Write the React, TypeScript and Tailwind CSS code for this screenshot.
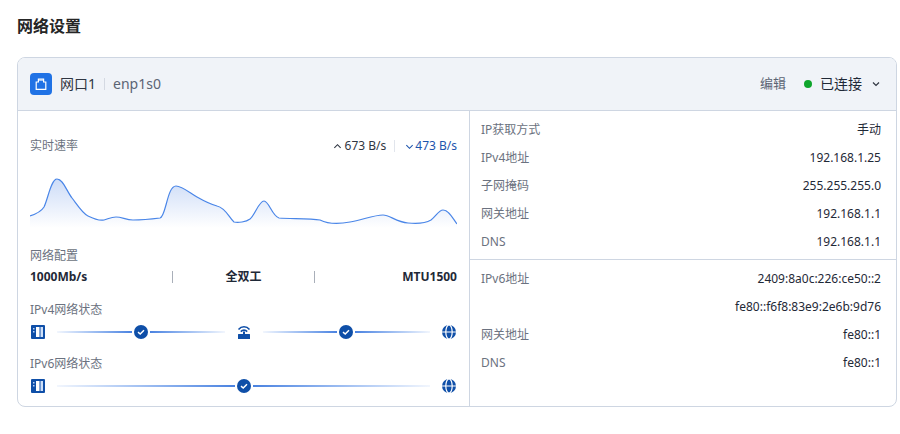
const linePath =
  "M30 216 C36 214 41 212 44 207 C48 199 51 179 57 179 C63 179 66 190 72 198 C78 206 83 214 88 216 C94 219 99 221 104 220 C108 219 111 217 116 217 C122 217 126 220 133 220 C142 220 152 219 160 218 C166 217 167 186 176 186 C182 186 190 193 197 197 C204 201 210 204 217 206 C226 208 229 218 234 222 C238 223 246 222 250 219 C255 215 259 201 264 201 C269 201 272 216 279 218 C290 219 310 218 320 220 C328 224 340 224 350 222 C362 220 374 215 383 215 C390 215 396 222 408 223 C418 224 426 223 431 220 C436 216 439 210 443 210 C449 210 453 219 457 224";

const leftRows = [
  { label: "IP获取方式", value: "手动" },
  { label: "IPv4地址", value: "192.168.1.25" },
  { label: "子网掩码", value: "255.255.255.0" },
  { label: "网关地址", value: "192.168.1.1" },
  { label: "DNS", value: "192.168.1.1" },
];

const ipv6Rows = [
  { label: "IPv6地址", value: "2409:8a0c:226:ce50::2" },
  { label: "", value: "fe80::f6f8:83e9:2e6b:9d76" },
  { label: "网关地址", value: "fe80::1" },
  { label: "DNS", value: "fe80::1" },
];

function InfoRow({ label, value }: { label: string; value: string }) {
  return (
    <div className="flex h-7 items-center justify-between">
      <span className="text-[#6b7280]">{label}</span>
      <span className="text-[#1f2937]">{value}</span>
    </div>
  );
}

function HostIcon() {
  return (
    <svg width="14" height="14" viewBox="0 0 14 14" className="shrink-0">
      <rect x="0" y="0" width="14" height="14" rx="1" fill="#0f4fa8" />
      <rect x="2" y="3" width="1.5" height="1.5" fill="#b9d2f5" />
      <rect x="2" y="6" width="1.5" height="1.5" fill="#b9d2f5" />
      <rect x="5" y="2" width="3.5" height="10" fill="#ffffff" />
      <rect x="9.5" y="2" width="2.5" height="10" fill="#cfe0f8" />
    </svg>
  );
}

function RouterIcon() {
  return (
    <svg width="14" height="14" viewBox="0 0 14 14" className="shrink-0">
      <path d="M1.5 4.5 C4.5 0.8 9.5 0.8 12.5 4.5" fill="none" stroke="#0f4fa8" strokeWidth="1.6" />
      <path d="M3.8 6.6 C5.6 4.6 8.4 4.6 10.2 6.6" fill="none" stroke="#0f4fa8" strokeWidth="1.6" />
      <rect x="6" y="6.5" width="2" height="3" fill="#0f4fa8" />
      <rect x="1" y="9" width="12" height="5" rx="0.5" fill="#0f4fa8" />
    </svg>
  );
}

function GlobeIcon() {
  return (
    <svg width="14" height="14" viewBox="0 0 14 14" className="shrink-0">
      <circle cx="7" cy="7" r="7" fill="#0f4fa8" />
      <ellipse cx="7" cy="7" rx="3.2" ry="7" fill="none" stroke="#ffffff" strokeWidth="1.2" />
      <path d="M0 7 H14" stroke="#ffffff" strokeWidth="1" />
    </svg>
  );
}

function CheckDot() {
  return (
    <span className="flex h-[14px] w-[14px] shrink-0 items-center justify-center rounded-full bg-[#0f4fa8]">
      <svg width="10" height="10" viewBox="0 0 10 10">
        <path d="M2 5.2 L4.2 7 L8 3.2" fill="none" stroke="#ffffff" strokeWidth="1.5" />
      </svg>
    </span>
  );
}

function FadeLink() {
  return (
    <div className="flex flex-1 items-center gap-[2px]">
      <div className="h-[2px] flex-1 bg-gradient-to-r from-[#f2f6fd] to-[#4a82e0]" />
      <CheckDot />
      <div className="h-[2px] flex-1 bg-gradient-to-r from-[#4a82e0] to-[#f2f6fd]" />
    </div>
  );
}

export default function App() {
  return (
    <div
      className="h-[434px] w-[900px] overflow-hidden bg-white pl-[17px] pr-[3px] text-xs text-[#1f2937]"
      style={{ fontFamily: '"Noto Sans", "Noto Sans CJK SC", sans-serif' }}
    >
      <h1 className="flex h-[57px] items-center pb-[5px] text-base font-bold text-[#262626]">网络设置</h1>

      <div className="h-[350px] overflow-hidden rounded-lg border border-[#ced6e2]">
        <header className="flex h-[53px] items-center justify-between border-b border-[#ced6e2] bg-[#f0f3f8] pl-3 pr-[15px]">
          <div className="flex items-center">
            <span className="flex h-[22px] w-[22px] items-center justify-center rounded bg-[#2072e5]">
              <svg width="14" height="14" viewBox="0 0 14 14">
                <path
                  d="M2.2 5 H4.4 V2 H9.6 V5 H11.8 V12.4 H2.2 Z M6 2 V4 M8 2 V4"
                  fill="none"
                  stroke="#ffffff"
                  strokeWidth="1.2"
                />
              </svg>
            </span>
            <span className="ml-2 text-sm text-[#303642]">网口1</span>
            <span className="mx-2 h-3 w-px bg-[#d4d9e2]" />
            <span className="text-sm text-[#5b6474]">enp1s0</span>
          </div>
          <div className="flex items-center">
            <span className="text-[13px] text-[#5b6474]">编辑</span>
            <span className="ml-[18px] h-2 w-2 rounded-full bg-[#0ea52c]" />
            <span className="ml-2 text-sm text-[#1f2937]">已连接</span>
            <svg width="10" height="10" viewBox="0 0 10 10" className="ml-[9px]">
              <path d="M2 3.5 L5 6.5 L8 3.5" fill="none" stroke="#303642" strokeWidth="1.2" />
            </svg>
          </div>
        </header>

        <div className="flex h-[295px]">
          <section className="w-[452px] border-r border-[#ced6e2] px-3">
            <div className="mt-6 flex h-[22px] items-center justify-between">
              <span className="text-[#6b7280]">实时速率</span>
              <div className="flex items-center">
                <svg width="9" height="9" viewBox="0 0 10 10">
                  <path d="M1.5 6.5 L5 3 L8.5 6.5" fill="none" stroke="#303642" strokeWidth="1.2" />
                </svg>
                <span className="ml-[3px] text-[#303642]">673 B/s</span>
                <span className="ml-2 mr-[10px] h-3 w-px bg-[#e1e5ec]" />
                <svg width="9" height="9" viewBox="0 0 10 10">
                  <path d="M1.5 3.5 L5 7 L8.5 3.5" fill="none" stroke="#1c54ad" strokeWidth="1.2" />
                </svg>
                <span className="ml-px text-[#1c54ad]">473 B/s</span>
              </div>
            </div>

            <svg width="427" height="60" viewBox="30 170 427 60" className="mt-[13px] block">
              <defs>
                <linearGradient id="area" x1="0" y1="0" x2="0" y2="1">
                  <stop offset="0" stopColor="#cddcf7" />
                  <stop offset="1" stopColor="#ffffff" />
                </linearGradient>
              </defs>
              <path d={`${linePath} L457 228 L30 228 Z`} fill="url(#area)" />
              <path d={linePath} fill="none" stroke="#4a86e8" strokeWidth="1.2" />
            </svg>

            <div className="mt-4 flex h-5 items-center text-[#6b7280]">网络配置</div>
            <div className="grid h-[22px] grid-cols-3 items-center font-bold text-[#1f2937]">
              <span>1000Mb/s</span>
              <span className="flex h-3 items-center justify-center border-x border-[#a9afb9]">全双工</span>
              <span className="text-right">MTU1500</span>
            </div>

            <div className="mt-3 flex h-5 items-center text-[#6b7280]">IPv4网络状态</div>
            <div className="mt-[5px] flex h-[14px] items-center gap-3 px-px">
              <HostIcon />
              <FadeLink />
              <RouterIcon />
              <FadeLink />
              <GlobeIcon />
            </div>

            <div className="mt-[15px] flex h-5 items-center text-[#6b7280]">IPv6网络状态</div>
            <div className="mt-[5px] flex h-[14px] items-center gap-3 px-px">
              <HostIcon />
              <FadeLink />
              <GlobeIcon />
            </div>
          </section>

          <section className="flex-1">
            <div className="h-[149px] border-b border-[#ced6e2] pl-[11px] pr-[15px] pt-[5px]">
              {leftRows.map((row) => (
                <InfoRow key={row.label} label={row.label} value={row.value} />
              ))}
            </div>
            <div className="pl-[11px] pr-[15px] pt-[5px]">
              {ipv6Rows.map((row) => (
                <InfoRow key={row.value} label={row.label} value={row.value} />
              ))}
            </div>
          </section>
        </div>
      </div>
    </div>
  );
}
